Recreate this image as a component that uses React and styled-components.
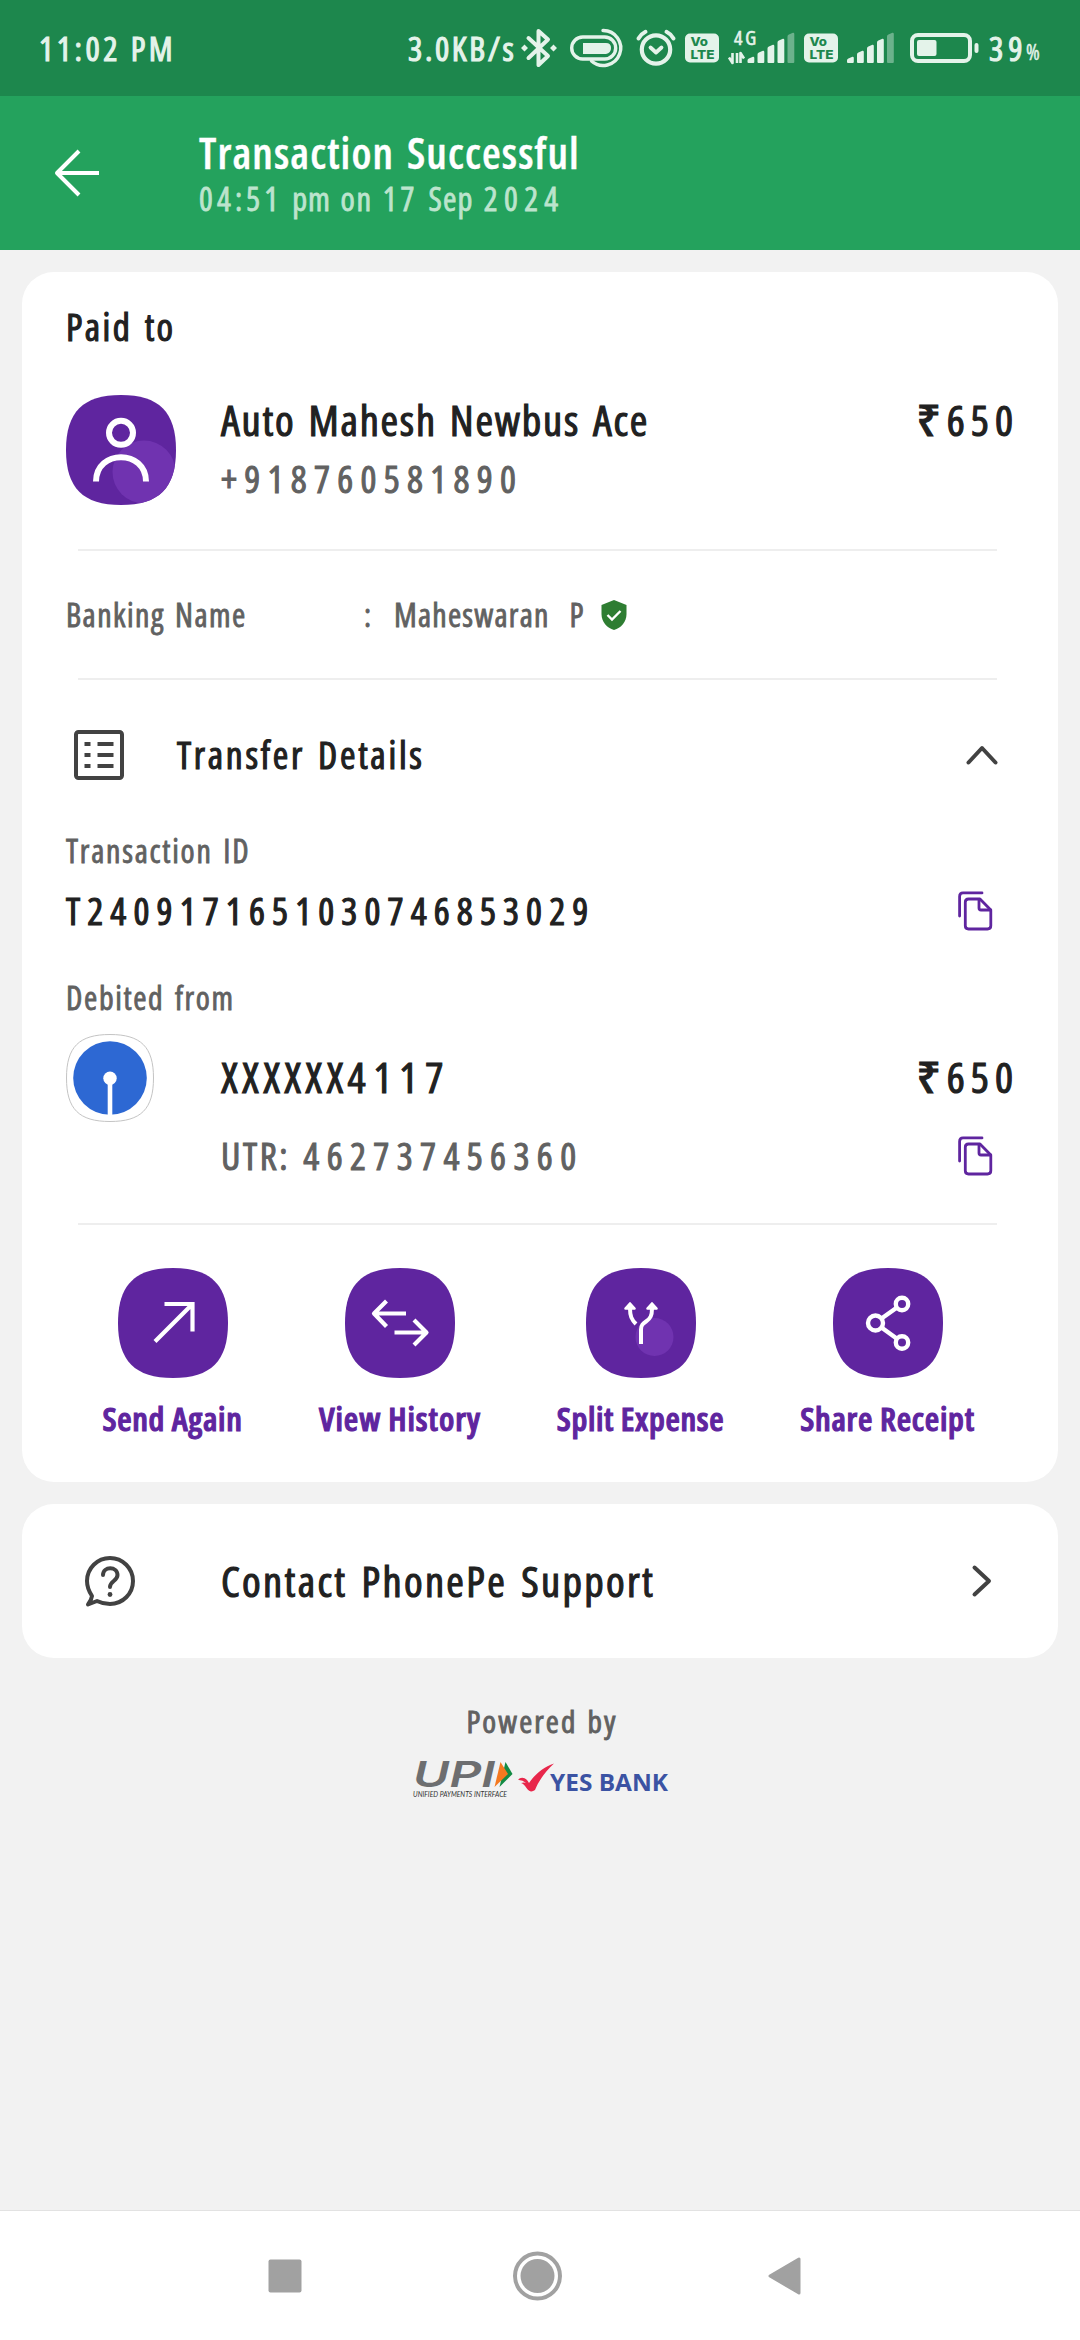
import React from 'react';
import styled, { createGlobalStyle } from 'styled-components';

const GlobalStyle = createGlobalStyle`
  * { box-sizing: border-box; }
  body {
    margin: 0;
    background: #f2f2f2;
    font-family: "Open Sans", "Noto Sans", sans-serif;
    font-stretch: 75%;
  }
  svg { display: block; flex: none; overflow: visible; }
`;

const ink = '#e4f3ea';
const purple = '#5f259f';

const Screen = styled.div`
  width: 1080px;
  height: 2340px;
  display: flex;
  flex-direction: column;
  background: #f2f2f2;
`;

/* One line of type: size, colour, weight, tracking and line height vary by use. */
const Text = styled.span`
  display: block;
  white-space: pre;
  font-size: ${(p) => p.$size}px;
  line-height: ${(p) => p.$line || 48}px;
  font-weight: ${(p) => (p.$bold ? 600 : 500)};
  letter-spacing: ${(p) => p.$track || 0}px;
  word-spacing: ${(p) => p.$word || 0}px;
  color: ${(p) => (p.$muted ? '#616161' : '#212121')};
  -webkit-text-stroke: ${(p) => p.$stroke ?? 1.1}px currentColor;
`;

const Words = styled.div`
  display: flex;
  gap: ${(p) => p.$gap || 0}px;
`;

/* ---------- status bar ---------- */
const StatusBar = styled.div`
  height: 96px;
  flex: none;
  background: #1d874d;
  display: flex;
  align-items: center;
  padding-left: 39px;
`;
const StatusText = styled(Text)`
  color: ${ink};
  width: ${(p) => p.$w}px;
`;
const StatusIcon = styled.svg`
  margin-left: ${(p) => p.$gap}px;
`;
const Percent = styled(StatusText)`
  padding-top: 7px;
`;

/* ---------- header ---------- */
const Header = styled.header`
  height: 154px;
  flex: none;
  background: #24a25d;
  display: flex;
  align-items: center;
  padding-left: 53px;
  gap: 98px;
`;
const HeaderTexts = styled.div`
  display: flex;
  flex-direction: column;
  padding-top: 4px;
`;
const Title = styled(Text)`
  color: #fff;
`;
const Subtitle = styled(Text)`
  color: #bce4cd;
`;

/* ---------- cards ---------- */
const Card = styled.section`
  margin: 22px 22px 0;
  flex: none;
  background: #fff;
  border-radius: 32px;
`;
const ReceiptCard = styled(Card)`
  height: 1210px;
  padding: 31px 44px 0;
  display: flex;
  flex-direction: column;
`;
const Divider = styled.hr`
  flex: none;
  border: 0;
  height: 2px;
  width: 919px;
  background: #eee;
  margin: ${(p) => p.$top || 0}px 0 0 12px;
`;
const PayeeRow = styled.div`
  display: flex;
  margin-top: 44px;
  height: 119px;
`;
const PayeeTexts = styled.div`
  flex: 1;
  padding-left: 45px;
`;
const BankingRow = styled.div`
  height: 127px;
  display: flex;
  align-items: center;
`;
const BankingLabel = styled.div`
  width: 298px;
`;
const Colon = styled.div`
  width: 30px;
`;
const DetailsHeader = styled.div`
  height: 149px;
  display: flex;
  align-items: center;
  padding: 1px 16px 0 7px;
`;
const DetailsTitle = styled.div`
  flex: 1;
  padding-left: 52px;
`;
const CopyRow = styled.div`
  height: ${(p) => p.$h}px;
  padding: 0 21px 0 ${(p) => p.$left || 0}px;
  display: flex;
  align-items: center;
  justify-content: space-between;
`;
const DebitLabel = styled.div`
  margin-top: 26px;
`;
const BankRow = styled.div`
  height: 88px;
  margin-top: 14px;
  display: flex;
  align-items: center;
`;
const Account = styled.div`
  flex: 1;
  padding: 0 0 3px 67px;
`;
const Amount = styled(Text)`
  padding-bottom: ${(p) => p.$lift || 0}px;
  margin-right: -5px;
`;
const Actions = styled.div`
  margin-top: 43px;
  padding-left: 37px;
  display: flex;
  gap: 77px;
`;
const Action = styled.div`
  width: ${(p) => p.$w}px;
  display: flex;
  flex-direction: column;
  align-items: center;
  gap: 17px;
`;
const ActionLabel = styled(Text)`
  color: ${purple};
`;
const SupportCard = styled(Card)`
  height: 154px;
  display: flex;
  align-items: center;
  padding: 0 66px 0 62px;
`;
const SupportText = styled.div`
  flex: 1;
  padding-left: 85px;
`;

/* ---------- footer ---------- */
const Footer = styled.footer`
  flex: 1;
  display: flex;
  flex-direction: column;
  align-items: center;
  padding-top: 41px;
  gap: 15px;
`;
const PoweredBy = styled(Text)`
  padding-left: 4px;
`;
const NavBar = styled.nav`
  height: 130px;
  flex: none;
  background: #fff;
  border-top: 1px solid #e2e2e2;
  display: flex;
  align-items: center;
  padding-left: 268px;
`;
const NavIcon = styled.svg`
  margin-left: ${(p) => p.$gap || 0}px;
`;

const LogoText = styled.text`
  font-family: ${(p) => p.$family};
  font-size: ${(p) => p.$size}px;
  font-weight: ${(p) => p.$weight || 400};
  font-style: ${(p) => (p.$italic ? 'italic' : 'normal')};
  font-stretch: ${(p) => p.$stretch || '100%'};
`;

const VoLte = ({ gap }) => (
  <StatusIcon $gap={gap} width="34" height="30" viewBox="0 0 34 30">
    <rect x="0" y="0.5" width="34" height="29" rx="5" fill={ink} />
    <LogoText $family="Inter, sans-serif" $size={12} $weight={800} x="5.5" y="13" textLength="17.5" lengthAdjust="spacingAndGlyphs" fill="#1d874d">Vo</LogoText>
    <LogoText $family="Inter, sans-serif" $size={12} $weight={800} x="5.5" y="25.5" textLength="24" lengthAdjust="spacingAndGlyphs" fill="#1d874d">LTE</LogoText>
  </StatusIcon>
);

const bars = [7, 13, 19, 25, 31];
const Bars = ({ x }) => (
  <g transform={`translate(${x} 0)`} fill={ink}>
    {bars.map((h, i) => (
      <path
        key={h}
        opacity={i === 4 ? 0.4 : 1}
        d={`M${i * 10} ${34.5 - h + 4} Q${i * 10} ${34.5 - h + 2.6} ${i * 10 + 1.4} ${34.5 - h + 2} L${i * 10 + 5.4} ${34.5 - h + 0.2} Q${i * 10 + 6.8} ${34.5 - h} ${i * 10 + 6.8} ${34.5 - h + 1.4} V33 Q${i * 10 + 6.8} 34 ${i * 10 + 5.8} 34 H${i * 10 + 1} Q${i * 10} 34 ${i * 10} 33 Z`}
      />
    ))}
  </g>
);

const squircle = 'M0 55C0 17 17 0 55 0S110 17 110 55 93 110 55 110 0 93 0 55Z';

const Tile = ({ children }) => (
  <svg width="110" height="110" viewBox="0 0 110 110" fill="none">
    <path d={squircle} fill={purple} />
    {children}
  </svg>
);

const CopyIcon = () => (
  <svg width="35" height="40" viewBox="0 0 35 40" fill="none" stroke={purple} strokeWidth="2.8" strokeLinecap="round" strokeLinejoin="round">
    <path d="M24 1.9H5Q1.6 1.9 1.6 5.4V25" />
    <path d="M22 8H10.5Q7.3 8 7.3 11.2V34.8Q7.3 38 10.5 38H29.5Q32.8 38 32.8 34.8V19Z" />
    <path d="M21 8.5V17Q21 19 23 19H32.5" />
  </svg>
);

const subtitle = [
  { word: '04:51', track: 4.14 },
  { word: 'pm', track: 0.8 },
  { word: 'on', track: 1.6 },
  { word: '17', track: 4 },
  { word: 'Sep', track: 1.2 },
  { word: '2024', track: 6.4 },
];

const actions = [
  {
    label: 'Send Again', w: 139, track: 0.66,
    icon: <path d="M37 73.5L74.5 36M46.5 36H74.500V63.500" stroke="#fff" strokeWidth="4.200" />,
  },
  {
    label: 'View History', w: 162, track: 0.95,
    icon: <path d="M61 45.500H29M41.500 33L29 45.500 41.500 58.500M49.500 64.500H81.500M69 52L81.500 64.500 69 77" stroke="#fff" strokeWidth="4.200" strokeLinejoin="round" />,
  },
  {
    label: 'Split Expense', w: 165, track: 0.65,
    icon: (
      <g>
        <circle cx="68.500" cy="69" r="19" fill="#7033b0" />
        <path d="M55 76V61.500C55 57 57 55.500 60 53.500C64.500 50.500 66 47.500 66 40.500M44 40.500C44 48 45.500 51.500 50 56" stroke="#fff" strokeWidth="4" />
        <path d="M44 35.500L48.500 40.500H39.500ZM66 35.500L70.500 40.500H61.500Z" fill="#fff" stroke="#fff" strokeWidth="2.600" strokeLinejoin="round" />
      </g>
    ),
  },
  {
    label: 'Share Receipt', w: 175, track: 0.75,
    icon: (
      <g stroke="#fff" strokeWidth="4.400">
        <circle cx="42.500" cy="55" r="7.500" />
        <circle cx="69" cy="36" r="6.200" />
        <circle cx="69" cy="74.500" r="6.200" />
        <path d="M48.500 50.500L64 39.500M48.500 59.500L64 70.800" />
      </g>
    ),
  },
];

export default function App() {
  return (
    <Screen>
      <GlobalStyle />
      <StatusBar>
        <StatusText $size={33.5} $track={3.5} $w={369}>11:02 PM</StatusText>
        <StatusText $size={33.5} $track={2.65} $w={113}>3.0KB/s</StatusText>
        <StatusIcon $gap={0} width="36" height="40" viewBox="0 0 36 40" fill="none" stroke={ink} strokeWidth="4" strokeLinejoin="round" strokeLinecap="round">
          <path d="M7.500 10L27 28 17.500 37V3L27 11.500 7.500 30" />
          <path d="M3.500 16.500L7 20 3.500 23.500 0 20ZM32.500 16.500L36 20 32.500 23.500 29 20Z" fill={ink} stroke="none" />
        </StatusIcon>
        <StatusIcon $gap={13} width="53" height="40" viewBox="0 0 53 40" fill="none" stroke={ink} strokeWidth="3.400">
          <rect x="1.700" y="9" width="44" height="22" rx="11" />
          <path d="M13 15H36Q41 15 41 20T36 26H13Z" fill={ink} stroke="none" />
          <path d="M33 2.500A17.500 17.500 0 1 1 21.500 33" strokeLinecap="round" />
        </StatusIcon>
        <StatusIcon $gap={12.5} width="40" height="40" viewBox="0 0 40 40" fill="none" stroke={ink} strokeLinecap="round">
          <circle cx="20" cy="21.500" r="14.200" strokeWidth="4.200" />
          <path d="M14.500 19.500L20 24.500 25.500 19.500" strokeWidth="3.800" strokeLinejoin="round" />
          <path d="M2.500 10.500Q5 6 9.500 3.800M37.500 10.500Q35 6 30.500 3.800" strokeWidth="4" />
        </StatusIcon>
        <VoLte gap={9.5} />
        <StatusIcon $gap={9} width="67" height="38" viewBox="0 0 67 38">
          <LogoText $family='"Open Sans", sans-serif' $size={20} $weight={500} $stretch="75%" x="6" y="16" textLength="22" fill={ink} stroke={ink} strokeWidth="0.6">4G</LogoText>
          <path d="M4.500 24V34L1 28.500M9 24V34M12.500 34V24L16 29.500" fill="none" stroke={ink} strokeWidth="2.600" strokeLinejoin="round" />
          <Bars x={19.5} />
        </StatusIcon>
        <VoLte gap={9} />
        <StatusIcon $gap={9} width="48" height="38" viewBox="0 0 48 38">
          <Bars x={0} />
        </StatusIcon>
        <StatusIcon $gap={15} width="69" height="30" viewBox="0 0 69 30">
          <rect x="2" y="2" width="58" height="26" rx="6" fill="none" stroke={ink} strokeWidth="4" />
          <rect x="7" y="7" width="19.500" height="16" rx="2" fill={ink} />
          <rect x="64.500" y="10" width="4" height="10" rx="2" fill={ink} />
        </StatusIcon>
        <StatusIcon $gap={0} width="10" height="1" />
        <StatusText $size={33.5} $track={5} $w={37}>39</StatusText>
        <Percent $size={21} $stroke={0.4} $w={16}>%</Percent>
      </StatusBar>

      <Header>
        <svg width="48" height="50" viewBox="0 0 48 50" fill="none" stroke="#fff" strokeWidth="4" strokeLinejoin="round">
          <path d="M46 25H4M26 3L4 25 26 47" />
        </svg>
        <HeaderTexts>
          <Title $size={43} $bold $stroke={0.4} $track={1.1} $word={4}>Transaction Successful</Title>
          <Words $gap={10}>
            {subtitle.map((s) => (
              <Subtitle key={s.word} $size={32.5} $track={s.track} $line={44} $stroke={0.8}>{s.word}</Subtitle>
            ))}
          </Words>
        </HeaderTexts>
      </Header>

      <ReceiptCard>
        <Text $size={37.5} $track={2.4} $word={3}>Paid to</Text>
        <PayeeRow>
          <Tile>
            <clipPath id="avatar"><path d={squircle} /></clipPath>
            <circle cx="78" cy="77" r="31.5" fill="#7033b0" clipPath="url(#avatar)" />
            <circle cx="55" cy="37.800" r="12" stroke="#fff" strokeWidth="6" />
            <path d="M30 86.500C30 54 80 54 80 86.500" stroke="#fff" strokeWidth="6" />
          </Tile>
          <PayeeTexts>
            <Text $size={42.5} $track={1.75} $word={3.4} $line={49}>Auto Mahesh Newbus Ace</Text>
            <Text $size={37.5} $track={7.3} $line={70} $stroke={1} $muted>+918760581890</Text>
          </PayeeTexts>
          <Amount $size={42.5} $track={6} $line={49}>₹650</Amount>
        </PayeeRow>
        <Divider $top={35} />
        <BankingRow>
          <BankingLabel><Text $size={32} $track={1.45} $word={3} $line={46} $stroke={0.8} $muted>Banking Name</Text></BankingLabel>
          <Colon><Text $size={32} $line={46} $stroke={0.8} $muted>:</Text></Colon>
          <Text $size={32} $track={1.2} $line={46} $stroke={0.8} $word={2.8} $muted>Maheswaran  P</Text>
          <StatusIcon $gap={16} width="26" height="30" viewBox="0 0 26 30">
            <path d="M13 0L25.500 5V14C25.500 22 20 28 13 30C6 28 0.500 22 0.500 14V5Z" fill="#2e7d32" />
            <path d="M6.500 15L11 19.500 19.500 11" fill="none" stroke="#fff" strokeWidth="2.400" />
          </StatusIcon>
        </BankingRow>
        <Divider />
        <DetailsHeader>
          <svg width="52" height="50" viewBox="0 0 52 50" fill="none" stroke="#424242" strokeWidth="4">
            <rect x="3" y="2" width="46" height="46" rx="2.500" />
            <path d="M11.500 14H17.500M24.500 14H40.500M11.500 25H17.500M24.500 25H40.500M11.500 36H17.500M24.500 36H40.500" strokeWidth="3.800" />
          </svg>
          <DetailsTitle><Text $size={37.5} $track={2.7} $word={3.5}>Transfer Details</Text></DetailsTitle>
          <svg width="32" height="20" viewBox="0 0 32 20" fill="none" stroke="#424242" strokeWidth="4" strokeLinecap="round" strokeLinejoin="round">
            <path d="M2.500 17.500L16 3 29.500 17.500" />
          </svg>
        </DetailsHeader>
        <Text $size={32} $line={44} $track={1.75} $word={3} $stroke={0.8} $muted>Transaction ID</Text>
        <CopyRow $h={76}>
          <Text $size={37.5} $track={7.15}>T2409171651030746853029</Text>
          <CopyIcon />
        </CopyRow>
        <DebitLabel><Text $size={32} $line={45} $track={1.65} $word={3} $stroke={0.8} $muted>Debited from</Text></DebitLabel>
        <BankRow>
          <svg width="88" height="88" viewBox="0 0 88 88">
            <path d="M0.500 44C0.500 13 13 0.500 44 0.500S87.500 13 87.500 44 75 87.500 44 87.500 0.500 75 0.500 44Z" fill="#fff" stroke="#c4c4c4" />
            <circle cx="44" cy="44" r="36.800" fill="#2d68d3" />
            <circle cx="44" cy="44.300" r="6.700" fill="#fff" />
            <rect x="41.700" y="48" width="4.600" height="34" fill="#fff" />
          </svg>
          <Account>
            <Words>
              <Text $size={42.5} $track={4.4}>XXXXXX</Text>
              <Text $size={42.5} $track={7.8}>4117</Text>
            </Words>
          </Account>
          <Amount $size={42.5} $track={6} $lift={3}>₹650</Amount>
        </BankRow>
        <CopyRow $h={67} $left={155}>
          <Words $gap={13}>
            <Text $size={37.5} $track={2.6} $stroke={1} $muted>UTR:</Text>
            <Text $size={37.5} $track={7.4} $stroke={1} $muted>462737456360</Text>
          </Words>
          <CopyIcon />
        </CopyRow>
        <Divider $top={34} />
        <Actions>
          {actions.map((a) => (
            <Action key={a.label} $w={a.w}>
              <Tile>{a.icon}</Tile>
              <ActionLabel $size={33} $bold $stroke={1.1} $track={a.track}>{a.label}</ActionLabel>
            </Action>
          ))}
        </Actions>
      </ReceiptCard>

      <SupportCard>
        <svg width="52" height="52" viewBox="0 0 52 52" fill="none" stroke="#424242" strokeWidth="4" strokeLinecap="round" strokeLinejoin="round">
          <path d="M8 41Q3 33.500 3 26A23 23 0 1 1 26 49Q19 49 13 46L4 49.500Q7.500 45 8 41Z" />
          <path d="M19 20C19 11 33.500 11 33.500 20C33.500 26 26 26 26 32" />
          <path d="M26 39.500V39.600" strokeWidth="4.800" />
        </svg>
        <SupportText><Text $size={42.5} $track={2.3} $word={4}>Contact PhonePe Support</Text></SupportText>
        <svg width="20" height="32" viewBox="0 0 20 32" fill="none" stroke="#424242" strokeWidth="4" strokeLinecap="round" strokeLinejoin="round">
          <path d="M2.500 2.500L17 16 2.500 29.500" />
        </svg>
      </SupportCard>

      <Footer>
        <PoweredBy $size={31.5} $line={44} $track={2.1} $word={2} $stroke={0.9} $muted>Powered by</PoweredBy>
        <svg width="256" height="42" viewBox="0 0 256 42">
          <LogoText $family="Inter, sans-serif" $size={36} $weight={600} $italic x="1" y="29" textLength="82" lengthAdjust="spacingAndGlyphs" fill="#6d6e70">UPI</LogoText>
          <path d="M87.500 29L93.500 4 100.500 16Z" fill="#128a43" />
          <path d="M82.500 29L88.500 4 96 16Z" fill="#f47920" />
          <LogoText $family="Lato, sans-serif" $size={7.8} $italic x="1" y="39" textLength="94" lengthAdjust="spacingAndGlyphs" fill="#333">UNIFIED PAYMENTS INTERFACE</LogoText>
          <path d="M106 22C108.500 18.500 114 19 117 25C123 16 132 9 142 5.500C134 13 127 22 123 32C119.500 34.500 117 33.500 114.500 30Q111.500 25.500 109 25Q112 24 114 25Q110 21.500 106 22Z" fill="#e8274b" />
          <LogoText $family='"Open Sans", sans-serif' $size={24} $weight={700} x="138" y="33" textLength="118" lengthAdjust="spacingAndGlyphs" fill="#3b53a3">YES BANK</LogoText>
        </svg>
      </Footer>

      <NavBar>
        <NavIcon width="34" height="34" viewBox="0 0 34 34">
          <rect x="0.500" y="0.500" width="33" height="33" rx="2" fill="#a1a1a1" />
        </NavIcon>
        <NavIcon $gap={210} width="50" height="50" viewBox="0 0 50 50">
          <circle cx="25.500" cy="25" r="22.500" fill="none" stroke="#a1a1a1" strokeWidth="4" />
          <circle cx="25.500" cy="25" r="17" fill="#a1a1a1" />
        </NavIcon>
        <NavIcon $gap={206} width="34" height="38" viewBox="0 0 34 38">
          <path d="M2 19L31 2V36Z" fill="#a1a1a1" stroke="#a1a1a1" strokeWidth="3" strokeLinejoin="round" />
        </NavIcon>
      </NavBar>
    </Screen>
  );
}
